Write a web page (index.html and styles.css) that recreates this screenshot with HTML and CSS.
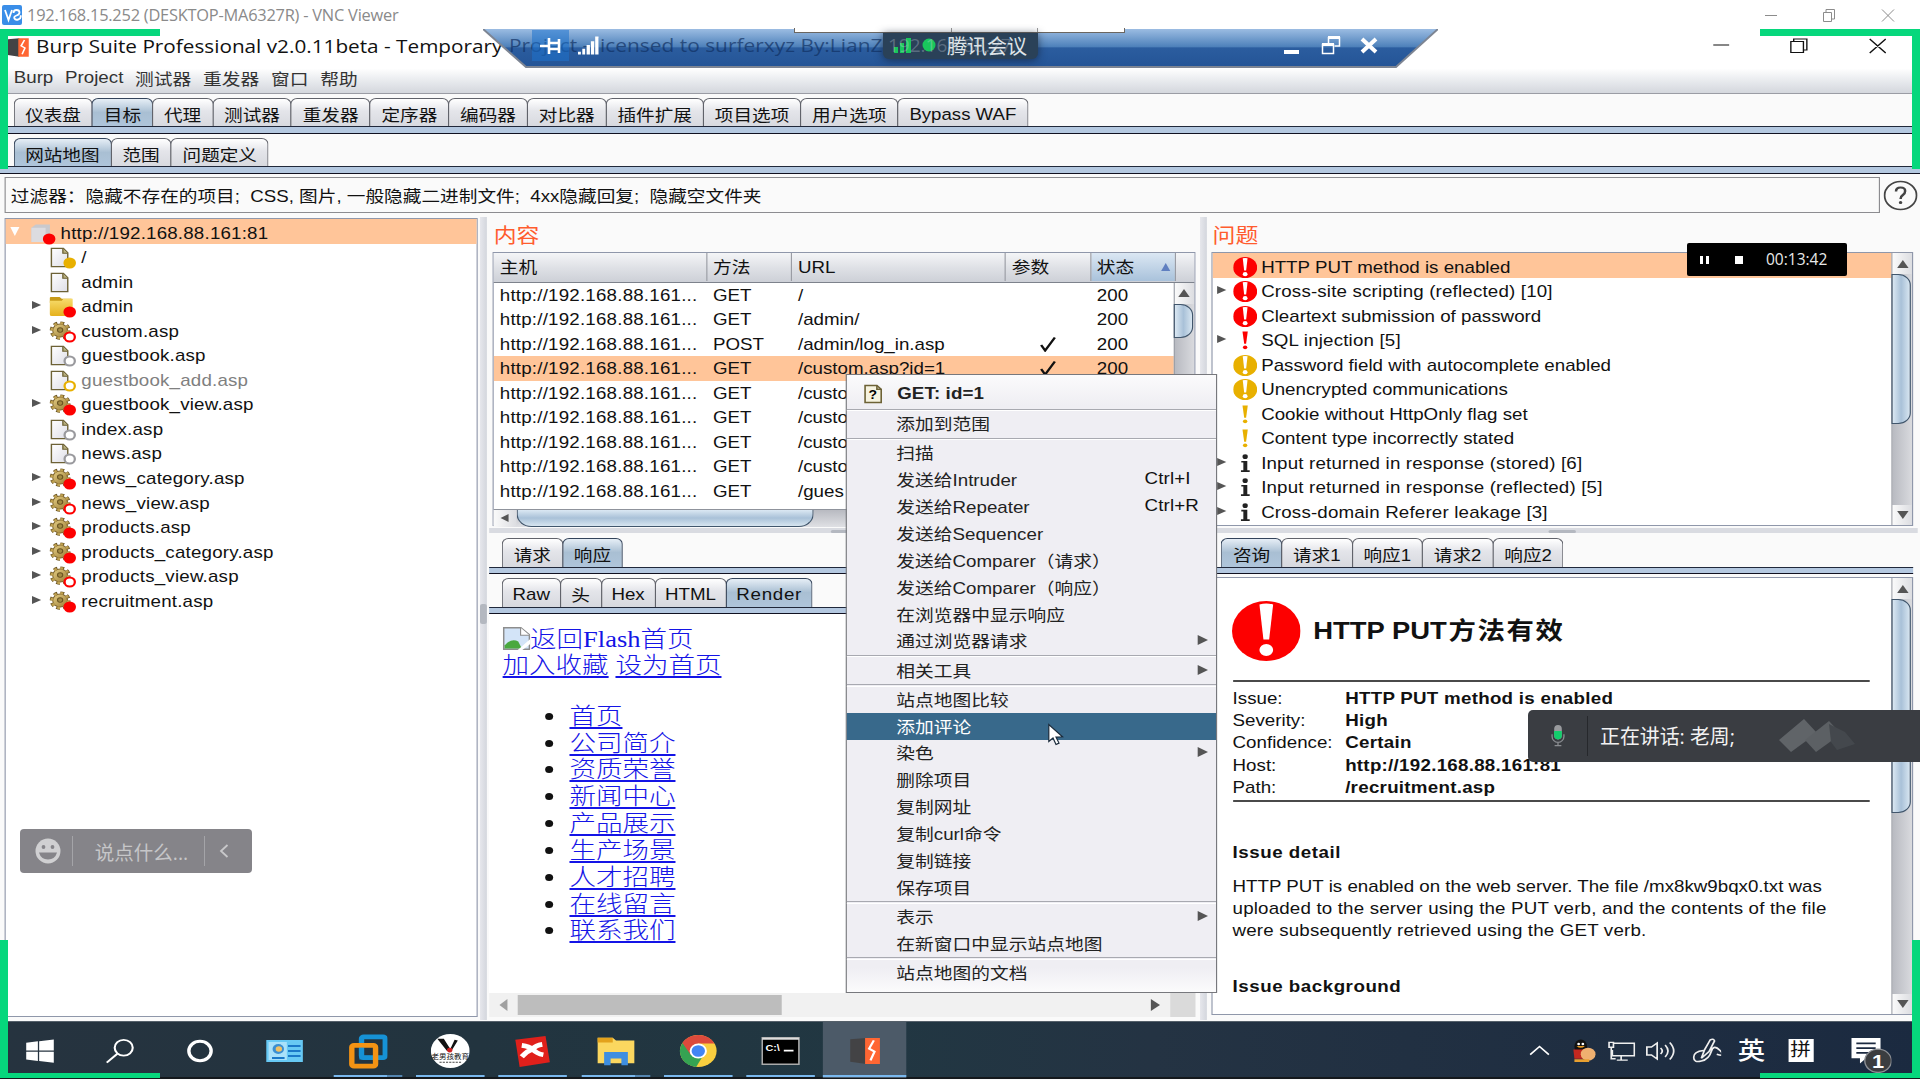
FILE: index.html
```html
<!DOCTYPE html>
<html lang="zh-CN">
<head>
<meta charset="utf-8">
<title>192.168.15.252 (DESKTOP-MA6327R) - VNC Viewer</title>
<link rel="stylesheet" href="styles.css">
</head>
<body>
<svg class="defs" width="0" height="0">
  <defs>
    <linearGradient id="gold" x1="0" y1="0" x2="1" y2="1"><stop offset="0" stop-color="#e6cf86"/><stop offset="1" stop-color="#9a7c33"/></linearGradient>
    <linearGradient id="fold" x1="0" y1="0" x2="0" y2="1"><stop offset="0" stop-color="#f7dc6c"/><stop offset="1" stop-color="#e5b11c"/></linearGradient>
    <linearGradient id="paper" x1="0" y1="0" x2="1" y2="1"><stop offset="0" stop-color="#fff"/><stop offset="1" stop-color="#dedee6"/></linearGradient>
    <symbol id="page" viewBox="0 0 24 22"><path d="M1.500 1.500h11l4 4.500v14.500h-15z" fill="url(#paper)" stroke="#6d6236" stroke-width="1.300"/><path d="M12 1.500v5h4.500" fill="#b9b07c" stroke="#6d6236" stroke-width="1.200"/></symbol>
    <symbol id="folder" viewBox="0 0 24 22"><path d="M0 2q0-1 1-1h8l2 2h9v4H0z" fill="#c79a18"/><path d="M0 5h11l1.500-2H21v16q0 2-2 2H2q-2 0-2-2z" fill="url(#fold)"/></symbol>
    <symbol id="gear" viewBox="0 0 24 22"><circle cx="9.500" cy="10" r="7.600" fill="none" stroke="#6b5523" stroke-width="4" stroke-dasharray="3.300 2.670"/><circle cx="9.500" cy="10" r="6.800" fill="url(#gold)" stroke="#806731" stroke-width="1"/><circle cx="9.500" cy="10" r="7.700" fill="none" stroke="#bfa150" stroke-width="2.600" stroke-dasharray="2.600 3.448"/><circle cx="9.500" cy="9.500" r="2.400" fill="#a38b42" stroke="#6b5523"/></symbol>
    <symbol id="dot" viewBox="0 0 12 12"><circle cx="6" cy="6" r="5.500" fill="currentColor"/></symbol>
    <symbol id="ring" viewBox="0 0 12 12"><circle cx="6" cy="6" r="4.500" fill="#fff" stroke="currentColor" stroke-width="2"/></symbol>
    <symbol id="alert" viewBox="0 0 60 60"><circle cx="30" cy="30" r="30" fill="currentColor"/><path d="M24 3.500q6-2 12 0l-3.500 35h-5z" fill="#fff"/><circle cx="30" cy="49" r="6" fill="#fff"/></symbol>
    <symbol id="bang" viewBox="0 0 20 20"><path d="M7.800 1.500h4.400l-1.400 11.500h-1.600z" fill="currentColor"/><circle cx="10" cy="16.500" r="1.800" fill="currentColor"/></symbol>
    <symbol id="info" viewBox="0 0 20 20"><circle cx="10" cy="3.500" r="2.200" fill="#222"/><path d="M6.800 7.500h5v9h2v1.500h-7.300v-1.500h2v-7.500h-1.700z" fill="#222"/></symbol>
    <symbol id="burp" viewBox="0 0 24 24"><path d="M1 2l12-1v22l-12-2z" fill="#434345"/><path d="M12 1h11v22H12z" fill="#ff6633"/><path d="M18.500 3l-3.500 7 4 2.500-3 7.500" fill="none" stroke="#fff" stroke-width="1.700"/></symbol>
  </defs>
</svg>

<header class="vnc">
  <svg class="vnc-logo" viewBox="0 0 20 20"><rect width="20" height="20" rx="2" fill="#3a8ee8"/><path d="M3 5l3.500 10L10 5M11.500 8q0-3 3-3t3 2.500q0 2-3 3t-2 3 4 .8 2-4" fill="none" stroke="#fff" stroke-width="1.800"/></svg>
  <span>192.168.15.252 (DESKTOP-MA6327R) - VNC Viewer</span>
  <svg class="vnc-btns" viewBox="0 0 130 16" fill="none" stroke="#8c8c8c"><path d="M0 8.500h12M58.500 5.500h8v9h-8zM61 5.500v-3h8.500v9.500H67M117 2.500l12 12M129 2.500l-12 12"/></svg>
</header>

<div class="screen">
<div class="remote">
  <div class="titlebar">
    <svg class="app-icon"><use href="#burp"/></svg>
    <span class="title">Burp Suite Professional v2.0.11beta - Temporary</span>
    <svg class="win-btns" viewBox="0 0 152 20" fill="none" stroke="#111" stroke-width="1.200"><path d="M0 9h14M68 5.500h11v11H68zM70.500 5.500v-2.500H82v11h-2.500M137 3l14 14M151 3l-14 14"/></svg>
  </div>
  <nav class="menubar"><span>Burp</span><span>Project</span><span>测试器</span><span>重发器</span><span>窗口</span><span>帮助</span></nav>

  <div class="tabs"><span class="tab">仪表盘</span><span class="tab on">目标</span><span class="tab">代理</span><span class="tab">测试器</span><span class="tab">重发器</span><span class="tab">定序器</span><span class="tab">编码器</span><span class="tab">对比器</span><span class="tab">插件扩展</span><span class="tab">项目选项</span><span class="tab">用户选项</span><span class="tab">Bypass WAF</span></div>
  <div class="tabs"><span class="tab on">网站地图</span><span class="tab">范围</span><span class="tab">问题定义</span></div>

  <div class="filter-row">
    <div class="filter">过滤器：隐藏不存在的项目;&nbsp; CSS, 图片, 一般隐藏二进制文件;&nbsp; 4xx隐藏回复;&nbsp; 隐藏空文件夹</div>
    <svg class="help" viewBox="0 0 30 30" fill="none" stroke="#444" stroke-width="1.600"><circle cx="15" cy="15" r="14"/><path d="M11 11q0-4 4-4t4 3.500q0 2.500-2 4t-2 4" stroke-width="2.200"/><circle cx="15" cy="22" r=".8" stroke-width="1.500"/></svg>
  </div>

  <main class="main">
    <section class="tree">
      <div class="node root"><i class="down"></i><span class="ico"><svg viewBox="0 0 24 22"><path d="M2 5l4-3.500h13v14L15 20H2z" fill="#c9c9cd"/><path d="M2 5h13v15H2z" fill="#dcdce0"/></svg><svg class="badge red"><use href="#dot"/></svg></span>http://192.168.88.161:81</div>
      <div class="node"><i></i><span class="ico"><svg><use href="#page"/></svg><svg class="badge amber"><use href="#dot"/></svg></span>/</div>
      <div class="node"><i></i><span class="ico"><svg><use href="#page"/></svg></span>admin</div>
      <div class="node"><i class="right"></i><span class="ico"><svg><use href="#folder"/></svg><svg class="badge red"><use href="#dot"/></svg></span>admin</div>
      <div class="node"><i class="right"></i><span class="ico"><svg><use href="#gear"/></svg><svg class="badge red"><use href="#ring"/></svg></span>custom.asp</div>
      <div class="node"><i></i><span class="ico"><svg><use href="#page"/></svg><svg class="badge gray"><use href="#ring"/></svg></span>guestbook.asp</div>
      <div class="node dim"><i></i><span class="ico"><svg><use href="#page"/></svg><svg class="badge amber"><use href="#ring"/></svg></span>guestbook_add.asp</div>
      <div class="node"><i class="right"></i><span class="ico"><svg><use href="#gear"/></svg><svg class="badge red"><use href="#dot"/></svg></span>guestbook_view.asp</div>
      <div class="node"><i></i><span class="ico"><svg><use href="#page"/></svg><svg class="badge gray"><use href="#ring"/></svg></span>index.asp</div>
      <div class="node"><i></i><span class="ico"><svg><use href="#page"/></svg><svg class="badge gray"><use href="#ring"/></svg></span>news.asp</div>
      <div class="node"><i class="right"></i><span class="ico"><svg><use href="#gear"/></svg><svg class="badge red"><use href="#dot"/></svg></span>news_category.asp</div>
      <div class="node"><i class="right"></i><span class="ico"><svg><use href="#gear"/></svg><svg class="badge red"><use href="#ring"/></svg></span>news_view.asp</div>
      <div class="node"><i class="right"></i><span class="ico"><svg><use href="#gear"/></svg><svg class="badge red"><use href="#dot"/></svg></span>products.asp</div>
      <div class="node"><i class="right"></i><span class="ico"><svg><use href="#gear"/></svg><svg class="badge red"><use href="#dot"/></svg></span>products_category.asp</div>
      <div class="node"><i class="right"></i><span class="ico"><svg><use href="#gear"/></svg><svg class="badge red"><use href="#ring"/></svg></span>products_view.asp</div>
      <div class="node"><i class="right"></i><span class="ico"><svg><use href="#gear"/></svg><svg class="badge red"><use href="#dot"/></svg></span>recruitment.asp</div>
    </section>

    <div class="vsplit"><b></b></div>

    <section class="center">
      <h2>内容</h2>
      <div class="table">
        <div class="tr th"><span>主机</span><span>方法</span><span>URL</span><span>参数</span><span class="sorted">状态<i class="up"></i></span><span></span></div>
        <div class="table-body">
          <div class="rows">
            <div class="tr"><span>http://192.168.88.161...</span><span>GET</span><span>/</span><span></span><span>200</span></div>
            <div class="tr"><span>http://192.168.88.161...</span><span>GET</span><span>/admin/</span><span></span><span>200</span></div>
            <div class="tr"><span>http://192.168.88.161...</span><span>POST</span><span>/admin/log_in.asp</span><span class="chk"><svg viewBox="0 0 14 16"><path d="M1 9l3.500 5.500L13 1.500" fill="none" stroke="#111" stroke-width="2.200"/></svg></span><span>200</span></div>
            <div class="tr sel"><span>http://192.168.88.161...</span><span>GET</span><span>/custom.asp?id=1</span><span class="chk"><svg viewBox="0 0 14 16"><path d="M1 9l3.500 5.500L13 1.500" fill="none" stroke="#111" stroke-width="2.200"/></svg></span><span>200</span></div>
            <div class="tr"><span>http://192.168.88.161...</span><span>GET</span><span>/custo</span><span></span><span></span></div>
            <div class="tr"><span>http://192.168.88.161...</span><span>GET</span><span>/custo</span><span></span><span></span></div>
            <div class="tr"><span>http://192.168.88.161...</span><span>GET</span><span>/custo</span><span></span><span></span></div>
            <div class="tr"><span>http://192.168.88.161...</span><span>GET</span><span>/custo</span><span></span><span></span></div>
            <div class="tr"><span>http://192.168.88.161...</span><span>GET</span><span>/gues</span><span></span><span></span></div>
          </div>
          <div class="vbar"><span class="btn"><i class="up"></i></span><span class="knob short"></span></div>
        </div>
        <div class="hbar"><span class="btn"><i class="left"></i></span><span class="knob"></span></div>
      </div>
      <div class="hsplit"><b></b></div>
      <div class="tabs"><span class="tab">请求</span><span class="tab on">响应</span></div>
      <div class="tabs view-tabs"><span class="tab">Raw</span><span class="tab">头</span><span class="tab">Hex</span><span class="tab">HTML</span><span class="tab on spaced">Render</span></div>
      <article class="render">
        <p><svg class="broken" viewBox="0 0 24 23"><path d="M.7.700h15l7.600 7v14.600H.7z" fill="#d3e4f8" stroke="#8d8d8d" stroke-width="1.400"/><path d="M15.500.700v7.500h7.800" fill="#fff" stroke="#8d8d8d"/><path d="M1.500 21.500v-3q6-8 12-4l3 7z" fill="#4aa83f"/><path d="M13 23l11-11v5l-7 6z" fill="#fff"/></svg><a class="plain">返回Flash首页</a></p>
        <p><a>加入收藏</a> <a>设为首页</a></p>
        <ul><li><a>首页</a></li><li><a>公司简介</a></li><li><a>资质荣誉</a></li><li><a>新闻中心</a></li><li><a>产品展示</a></li><li><a>生产场景</a></li><li><a>人才招聘</a></li><li><a>在线留言</a></li><li><a>联系我们</a></li></ul>
      </article>
      <div class="flatbar"><i class="left"></i><span class="flat-knob"></span><i class="right"></i><span class="flat-corner"></span></div>
    </section>

    <div class="vsplit"></div>

    <section class="side">
      <h2>问题</h2>
      <div class="issues">
        <div class="issue-list">
          <div class="issue sel"><i></i><svg class="red"><use href="#alert"/></svg>HTTP PUT method is enabled</div>
          <div class="issue wide"><i class="right"></i><svg class="red"><use href="#alert"/></svg>Cross-site scripting (reflected) [10]</div>
          <div class="issue"><i></i><svg class="red"><use href="#alert"/></svg>Cleartext submission of password</div>
          <div class="issue wide"><i class="right"></i><svg class="red"><use href="#bang"/></svg>SQL injection [5]</div>
          <div class="issue"><i></i><svg class="amber"><use href="#alert"/></svg>Password field with autocomplete enabled</div>
          <div class="issue"><i></i><svg class="amber"><use href="#alert"/></svg>Unencrypted communications</div>
          <div class="issue"><i></i><svg class="amber"><use href="#bang"/></svg>Cookie without HttpOnly flag set</div>
          <div class="issue"><i></i><svg class="amber"><use href="#bang"/></svg>Content type incorrectly stated</div>
          <div class="issue wide"><i class="right"></i><svg><use href="#info"/></svg>Input returned in response (stored) [6]</div>
          <div class="issue wide"><i class="right"></i><svg><use href="#info"/></svg>Input returned in response (reflected) [5]</div>
          <div class="issue wide"><i class="right"></i><svg><use href="#info"/></svg>Cross-domain Referer leakage [3]</div>
        </div>
        <div class="vbar"><span class="btn"><i class="up"></i></span><span class="knob list"></span><span class="btn end"><i class="down"></i></span></div>
      </div>
      <div class="hsplit"><b></b></div>
      <div class="tabs"><span class="tab on">咨询</span><span class="tab">请求1</span><span class="tab">响应1</span><span class="tab">请求2</span><span class="tab">响应2</span></div>
      <div class="advisory">
        <article class="doc">
          <h1><svg class="red"><use href="#alert"/></svg><span>HTTP PUT<span class="cn">方法有效</span></span></h1>
          <dl>
            <dt>Issue:</dt><dd>HTTP PUT method is enabled</dd>
            <dt>Severity:</dt><dd>High</dd>
            <dt>Confidence:</dt><dd>Certain</dd>
            <dt>Host:</dt><dd>http://192.168.88.161:81</dd>
            <dt>Path:</dt><dd>/recruitment.asp</dd>
          </dl>
          <h3>Issue detail</h3>
          <p>HTTP PUT is enabled on the web server. The file /mx8kw9bqx0.txt was<br><span class="wide">uploaded to the server using the PUT verb, and the contents of the file<br>were subsequently retrieved using the GET verb.</span></p>
          <h3>Issue background</h3>
        </article>
        <div class="vbar"><span class="btn"><i class="up"></i></span><span class="knob doc-knob"></span><span class="btn end"><i class="down"></i></span></div>
      </div>
    </section>
  </main>

  <footer class="taskbar">
    <span class="task"><svg viewBox="0 0 28 28" fill="#fff"><path d="M1 5l11-1.500v10H1zM13.200 3.400L27 1.500v12H13.200zM1 14.700h11v10L1 23.200zM13.200 14.700H27v12l-13.800-1.900z"/></svg></span>
    <span class="task"><svg viewBox="0 0 28 28" fill="none" stroke="#fff" stroke-width="2"><circle cx="17.500" cy="10.500" r="8.500"/><path d="M11.500 17L1.500 26.500"/></svg></span>
    <span class="task"><svg viewBox="0 0 28 28" fill="none" stroke="#fff" stroke-width="3.200"><circle cx="14" cy="14" r="10.500"/></svg></span>
    <span class="task"><svg viewBox="0 0 34 28"><path d="M1 3h32v22H1z" fill="#67c9f4"/><path d="M3 5h16v18H3z" fill="#a9e1fa"/><circle cx="11.500" cy="12" r="5" fill="#3b8fd2"/><circle cx="12" cy="12" r="2.800" fill="#f0c064"/><path d="M20 9h11M20 14h11M20 19h11M6 21h11" stroke="#1a78c8" stroke-width="2"/></svg></span>
    <span class="task open multi"><svg class="big" viewBox="0 0 36 36" fill="none" stroke-width="5"><rect x="12" y="3" width="22" height="22" rx="2" stroke="#1692d6"/><rect x="3" y="12" width="22" height="22" rx="2" stroke="#f39314"/><path d="M12 14.500V25h8" stroke="#1692d6" stroke-width="4"/></svg></span>
    <span class="task open"><svg class="big" viewBox="0 0 36 36"><circle cx="18" cy="18" r="18" fill="#fff"/><path d="M6 5h6l6 11 4-10 3 1-6 11h-4z" fill="#111"/><circle cx="17.500" cy="17" r="2.500" fill="#c22"/><text x="18" y="26" text-anchor="middle" font-size="7" fill="#111">老男孩教育</text><path d="M8 30h20" stroke="#444" stroke-dasharray="2 1"/></svg></span>
    <span class="task open"><svg class="big" viewBox="0 0 36 36"><path d="M2 6l28-4 4 28-28 5z" fill="#e0201b"/><path d="M8 12q7 1 10 4 3-4 9-5M8 24q5-6 10-8 4 5 10 6" stroke="#fff" stroke-width="5" fill="none"/></svg></span>
    <span class="task open multi"><svg class="big" viewBox="0 0 36 36"><path d="M1 4h14l3 3h17v24H1z" fill="#fbd75f"/><path d="M1 4h14v5H1z" fill="#e3a21c"/><path d="M7 19h22v14h-6v-7h-10v7H7z" fill="#3e8ee0"/></svg></span>
    <span class="task open"><svg class="big" viewBox="0 0 36 36"><circle cx="18" cy="18" r="17" fill="#f9ce3f"/><path d="M18 18L3.300 9.500A17 17 0 0 0 16 35l7-13z" fill="#35a352"/><path d="M3.300 9.500A17 17 0 0 1 33 10H18l-7 12z" fill="#dd4a3c"/><circle cx="18" cy="18" r="8" fill="#fff"/><circle cx="18" cy="18" r="6.200" fill="#4285f4"/></svg></span>
    <span class="task open"><svg class="big" viewBox="0 0 36 36"><path d="M1 4h34v28H1z" fill="#000" stroke="#aaa" stroke-width="1.500"/><path d="M1 5h34" stroke="#ddd" stroke-width="2"/><text x="4" y="18" font-size="10" font-weight="700" fill="#fff">C:\</text><path d="M21 17.500h9" stroke="#fff" stroke-width="1.800"/></svg></span>
    <span class="task open active"><svg class="big" viewBox="0 0 36 36"><use href="#burp" x="4" y="3" width="30" height="30"/></svg></span>
    <span class="tray">
      <svg class="t1" viewBox="0 0 22 24"><path d="M1 16l9-9 9 9" fill="none" stroke="#fff" stroke-width="1.600"/></svg>
      <svg class="t2" viewBox="0 0 26 26"><ellipse cx="11" cy="9" rx="6" ry="8" fill="#111"/><path d="M4 12h13v10H5z" fill="#c3281f"/><circle cx="18" cy="17" r="7" fill="#efb070"/><path d="M7 8q4 4 8 0" fill="#e99a22"/><circle cx="9" cy="6" r="1.300" fill="#fff"/><circle cx="13" cy="6" r="1.300" fill="#fff"/><path d="M5 24h14" stroke="#e8a030" stroke-width="3"/></svg>
      <svg class="t3" viewBox="0 0 26 24" fill="none" stroke="#eee" stroke-width="1.500"><path d="M6 4h19v13H5v-6M13 17v4M9 21.500h10M2 3h4v5H2zM4 8v12h4"/></svg>
      <svg class="t4" viewBox="0 0 26 24" fill="none" stroke="#eee" stroke-width="1.500"><path d="M1 8h4l5-4v16l-5-4H1zM13 9q3 3 0 6M17 6q5 6 0 12M21 3.500q7 8.500 0 17"/></svg>
      <svg class="t5" viewBox="0 0 26 26" fill="none" stroke="#eee" stroke-width="1.600"><path d="M8 21l3-9 5-10q3-2 4 1l-5 11-7 7zM10 13q-9 1-9 7t7 4 9-10 8-1-3 4"/></svg>
      <span class="t6">英</span><span class="t7">拼</span>
      <svg class="t8" viewBox="0 0 34 34"><path d="M1 1h24v19H13l-5 5v-5H1z" fill="#fff"/><path d="M5 6h16M5 10.500h16M5 15h12" stroke="#1c2a40" stroke-width="1.500"/><circle cx="23" cy="22.500" r="11" fill="#3b3d40" stroke="#8c8f94" stroke-width="1.200"/><text x="23" y="29" text-anchor="middle" font-size="18" font-weight="700" fill="#fff">1</text></svg>
    </span>
  </footer>

  <div class="ctx">
    <div class="mi head"><svg viewBox="0 0 17 20"><path d="M1 1h11l4 4v14H1z" fill="#f6f3e0" stroke="#6d6236" stroke-width="1.500"/><path d="M12 1v4h4" fill="none" stroke="#6d6236" stroke-width="1.500"/><text x="8.300" y="15.500" text-anchor="middle" font-size="13" font-weight="700">?</text></svg>GET: id=1</div>
    <hr>
    <div class="mi">添加到范围</div>
    <hr>
    <div class="mi">扫描</div>
    <div class="mi">发送给Intruder<kbd>Ctrl+I</kbd></div>
    <div class="mi">发送给Repeater<kbd>Ctrl+R</kbd></div>
    <div class="mi">发送给Sequencer</div>
    <div class="mi">发送给Comparer（请求）</div>
    <div class="mi">发送给Comparer（响应）</div>
    <div class="mi">在浏览器中显示响应</div>
    <div class="mi">通过浏览器请求<i class="right"></i></div>
    <hr>
    <div class="mi">相关工具<i class="right"></i></div>
    <hr>
    <div class="mi">站点地图比较</div>
    <div class="mi hot">添加评论</div>
    <div class="mi">染色<i class="right"></i></div>
    <div class="mi">删除项目</div>
    <div class="mi">复制网址</div>
    <div class="mi">复制curl命令</div>
    <div class="mi">复制链接</div>
    <div class="mi">保存项目</div>
    <hr>
    <div class="mi">表示<i class="right"></i></div>
    <div class="mi">在新窗口中显示站点地图</div>
    <hr>
    <div class="mi">站点地图的文档</div>
  </div>
</div>
</div>

<svg class="cursor" viewBox="0 0 16 22"><path d="M.8 1v17l4.200-3.500 3 6.500 3-1.400-3-6 6.500-.3z" fill="#fff" stroke="#1a2a3a" stroke-width="1.200"/></svg>

<div class="rdp">
  <svg class="rdp-bg" viewBox="0 0 955 39" preserveAspectRatio="none"><defs><linearGradient id="rdpg" x1="0" y1="0" x2="0" y2="1"><stop offset="0" stop-color="#9bbce2"/><stop offset=".46" stop-color="#4f82bb"/><stop offset=".5" stop-color="#2b5d9f"/><stop offset="1" stop-color="#245496"/></linearGradient></defs><path d="M0 0h955l-42 38H43z" fill="url(#rdpg)"/><path d="M0 0l43 38h870l42-38" fill="none" stroke="#7d8593" stroke-width="2"/></svg>
  <span class="ghost">Project - licensed to surferxyz By:LianZ</span>
  <span class="pin"><svg viewBox="0 0 22 16"><path d="M0 8h8M9 0v16M9 5h9M9 11h9M19 1v14" stroke="#fff" stroke-width="2.600" fill="none"/></svg></span>
  <svg class="signal" viewBox="0 0 22 19" fill="#fff"><path d="M0 16h3v3H0zM4.500 13h3v6h-3zM9 9h3.500v10H9zM13.500 5H17v14h-3.500zM18 0h3.500v19H18z"/></svg>
  <svg class="rdp-btns" viewBox="0 0 94 20" fill="none" stroke="#fff"><path d="M0 17h15" stroke-width="4"/><path d="M38.500 9.500h11v9h-11z" stroke-width="1.500"/><path d="M38 9.500h12M44 2.500h12" stroke-width="3"/><path d="M44.500 2v6M55.500 2v9h-5" stroke-width="1.500"/><path d="M78 4l14 13M92 4L78 17" stroke-width="4"/></svg>
</div>
<div class="notch"><b></b><b></b></div>
<div class="meeting"><em>192.168.88.27</em><svg viewBox="0 0 42 16" fill="#19c65c"><path d="M0 10h4v6H0zM6 6h4v10H6zM12 1h5v15h-5z"/><circle cx="35" cy="8" r="6.500"/></svg><span>腾讯会议</span></div>

<div class="recorder"><b></b><b></b><i></i><span>00:13:42</span></div>
<div class="speaking"><svg viewBox="0 0 16 26"><rect x="3.500" y="0" width="9" height="17" rx="4.500" fill="#999b9e"/><path d="M3.500 7h9v5.500a4.500 4.500 0 0 1-9 0z" fill="#12cf6c"/><path d="M1 11v2.500a7 7 0 0 0 14 0V11M8 20v4M4 24.500h8" fill="none" stroke="#8b8e92" stroke-width="1.500"/></svg><b></b><span>正在讲话: 老周;</span><svg class="smudge" viewBox="0 0 78 36"><path d="M0 22L25 1l13 14L12 34z" fill="#606468"/><path d="M26 22L50 3l12 13-25 18z" fill="#5c6064"/><path d="M50 6l16 8 10 12-18 6-6-8z" fill="#44484d"/></svg></div>
<div class="chat"><svg viewBox="0 0 28 26"><circle cx="14" cy="13" r="12.500" fill="#d0d0d2"/><circle cx="9.500" cy="9" r="1.900" fill="#858489"/><circle cx="18.500" cy="9" r="1.900" fill="#858489"/><path d="M5 14.500h18q-2 7-9 7t-9-7z" fill="#858489"/></svg><b></b><span>说点什么...</span><b></b><svg class="chev" viewBox="0 0 9 14"><path d="M8 1L1.500 7 8 13" fill="none" stroke="#c8c8ca" stroke-width="1.800"/></svg></div>

<div class="corner tl"></div><div class="corner tr-c"></div><div class="corner bl"></div><div class="corner br"></div>
</body>
</html>
```
FILE: styles.css
```css
* { box-sizing: border-box; }
body {
  margin: 0; width: 1920px; height: 1080px; overflow: hidden; background: #fff;
  font-family: "Liberation Sans", "Noto Sans CJK SC", sans-serif; color: #111;
}
.defs { position: absolute; }
svg { display: block; flex: none; }
i { flex: none; }

.vnc { height: 29px; display: flex; align-items: center; padding-left: 2px; color: #8a8a8a; font: 16.4px "Open Sans", sans-serif; }
.vnc-logo { width: 20px; height: 20px; margin-right: 5px; }
.vnc span { letter-spacing: -0.23px; margin-top: -1px; }
.vnc-btns { width: 130px; height: 16px; margin-left: auto; margin-right: 25px; }

/* The remote desktop is wider than it is drawn: only its width is scaled. */
.screen { width: 1920px; height: 1051px; overflow: hidden; }
.remote {
  position: relative; width: 1680px; height: 1051px; transform: scaleX(1.142857); transform-origin: 0 0;
  display: flex; flex-direction: column; background: #fafafa; font-size: 16.4px; white-space: nowrap;
}
.remote use { width: 100%; height: 100%; }
.red { color: #fd0000; } .amber { color: #e8b000; } .gray { color: #9a9a9e; }
.wide { letter-spacing: .15px; }

.titlebar { height: 35px; flex: none; display: flex; align-items: center; padding-left: 6px; background: #fff; }
.app-icon { width: 20px; height: 21px; margin-top: 1px; }
.title { margin: -2px 0 0 5.5px; font: 18.15px "Open Sans", sans-serif; color: #111; }
.win-btns { width: 152px; height: 20px; margin: -2px 29px 0 auto; }

.menubar {
  height: 30px; flex: none; display: flex; align-items: center; gap: 10.3px; padding: 0 12px 2px; color: #333;
  background: linear-gradient(#fff 15%, #eceef1 50%, #d4d7dd); border-bottom: 1px solid #9a9ca4;
}

.tabs {
  height: 40px; flex: none; display: flex; padding: 4px 0 0 11.5px; position: relative; font-size: 16.3px;
}
.tabs::after {
  content: ""; position: absolute; left: 0; right: 0; bottom: 0; height: 6px;
  background: #b4c8e0; border-top: 1.5px solid #20283a; border-bottom: 1.5px solid #101020;
}
.tab {
  height: 31px; display: flex; align-items: center; justify-content: center; padding: 0 9.5px; margin-right: -1px; min-width: 37px;
  border: 1px solid #61636b; border-bottom: 0; border-radius: 6px 6px 0 0;
  background: linear-gradient(#fff, #e4e5ea 40%, #d5d7dd); color: #111;
}
.tab.on { background: linear-gradient(#e6eef6, #a9bfd3 45%, #b0c6dc); border-color: #33435a; }
.view-tabs .tab { padding: 0 8.4px; font-size: 16.4px; }
.tab.spaced { letter-spacing: .6px; }

.filter-row { flex: none; display: flex; align-items: center; margin: 3px 0 0 3.5px; height: 36px; gap: 3px; }
.filter { width: 1641.5px; height: 36px; line-height: 36px; border: 1.6px solid #8c8c90; padding-left: 5px; font-size: 16.33px; }
.help { width: 30px; height: 31px; }

.main { flex: none; height: 807px; display: flex; padding-left: 3.5px; }
h2 { margin: 0; height: 39px; flex: none; font-size: 20px; font-weight: 400; line-height: 47px; color: #ff5c2e; padding-left: 4px; }
i { display: inline-block; width: 0; height: 0; border: 4px solid transparent; }
i.right { border-left: 8px solid #555; border-right: 0; }
i.left { border-right: 7px solid #555; border-left: 0; }
i.up { border-bottom: 8px solid #555; border-top: 0; }
i.down { border-top: 8px solid #555; border-bottom: 0; }

.tree { width: 414px; height: 799px; margin-top: 5px; border: 1.5px solid #8f97aa; background: #fff; flex: none; }
.node { height: 24.55px; display: flex; align-items: center; padding: 3.5px 0 0 23px; letter-spacing: .17px; }
.node > i { margin: 0 7.2px 3px 0; }
.node.root { background: #ffc599; padding-left: 4px; }
.node.root > i { border-top-color: #fff; margin-right: 8px; border-width: 9px 4.5px 0; }
.node.dim { color: #808080; }
.ico { position: relative; width: 23px; height: 21px; margin-right: 5.5px; flex: none; }
.ico svg { width: 24px; height: 21px; }
.ico .badge { position: absolute; width: 12px; height: 12px; right: -1px; bottom: -1px; }

.vsplit { flex: none; width: 6px; margin-left: 2.5px; background: linear-gradient(90deg, #e6e7ec, #d3d6dd); margin-top: 4px; display: flex; align-items: center; }
.vsplit b { width: 6px; height: 20px; background: #b4b8c0; border-radius: 2px; margin-top: -10px; }
.center { width: 622px; margin-left: 2px; flex: none; display: flex; flex-direction: column; }
.center + .vsplit { margin-left: 0; width: 5.5px; }

.table { margin-left: 2.8px; width: 615px; height: 274px; flex: none; border: 1.5px solid #8f97aa; background: #fff; }
.tr { display: grid; grid-template-columns: 186px 74.4px 187.2px 74.4px 74.4px 1fr; height: 24.55px; align-items: center; }
.tr span { padding-left: 6px; overflow: hidden; height: 24.500px; line-height: 25px; }
.rows .tr span:first-child { letter-spacing: .18px; padding-left: 5.500px; }
.th { height: 29.500px; border-bottom: 1.5px solid #7d828c; background: linear-gradient(#f4f5f7, #dfe1e6 50%, #cdd0d7); }
.th span { height: 28px; line-height: 27px; border-left: 1px solid #9a9ca4; display: flex; justify-content: space-between; align-items: center; padding-left: 5px; }
.th span:first-child { border-left: 0; padding-left: 5.500px; }
.th .sorted { background: linear-gradient(#dbe7f3, #a9c2db); }
.th .sorted i { border-bottom-color: #5f7fc0; margin-right: 4px; }
.table-body { display: flex; height: 226px; overflow: hidden; }
.rows { width: 595.500px; }
.rows .tr { grid-template-columns: 186px 74.400px 187.200px 74.400px 1fr; }
.sel { background: #ffc599; }
.tr .chk { display: flex; justify-content: center; align-items: center; padding: 0; }
.chk svg { width: 14px; height: 16px; }

.vbar { width: 18px; flex: none; background: linear-gradient(90deg, #b8bac1, #d9dade); border-left: 1px solid #8f939c; display: flex; flex-direction: column; }
.btn { height: 21px; display: flex; align-items: center; justify-content: center; background: linear-gradient(90deg, #fafafa, #dcdde1); }
.btn.end { margin-top: auto; height: 20px; }
.vbar .btn i { border-left-width: 5px; border-right-width: 5px; }
.knob { border: 1.5px solid #41566c; background: linear-gradient(90deg, #dbe8f3, #a9c1d8 50%, #d7e5f0); border-radius: 0 11px 11px 0; margin-left: -1px; margin-right: 1px; }
.knob.short { height: 34px; }
.knob.list { height: 150px; }
.knob.doc-knob { height: 214px; }
.hbar { height: 18px; display: flex; background: linear-gradient(#b8bac1, #dfe0e4); border-top: 1px solid #8f939c; }
.hbar .btn { width: 20px; height: 17px; }
.hbar .knob { width: 260px; height: 17px; border-radius: 0 0 13px 13px; border-top: 0; margin: 0; background: linear-gradient(#dbe8f3, #a9c1d8 50%, #d7e5f0); }

.hsplit { height: 5px; flex: none; margin-top: 2px; background: #d9dbe1; display: flex; justify-content: center; }
.hsplit b { width: 24px; height: 3px; background: #b4b8c0; border-radius: 2px; margin-top: 2px; }
.center .tabs, .side .tabs { height: 41px; padding-top: 5px; }
.center .tabs { padding-left: 11px; }
.center .tabs::after, .side .tabs::after { height: 5.5px; }
.center .tabs + .tabs { height: 40px; padding-top: 4px; }

.render { flex: 1; background: #fff; padding: 11.5px 0 0 11.8px; font: 23.2px/26.85px "Liberation Serif", "Noto Sans CJK SC", serif; font-weight: 300; overflow: hidden; }
.render p { margin: 0; display: flex; gap: 6px; }
.render p:first-child { gap: 0; }
.render a { color: #1414e6; text-decoration: underline; text-decoration-thickness: 1.800px; text-underline-offset: 2.500px; }
.render a.plain { text-decoration: none; }
.render ul { margin: 23.5px 0 0; padding-left: 58.500px; }
.broken { width: 24px; height: 23px; margin-top: 1px; }
.flatbar { height: 24px; flex: none; margin-bottom: 3px; background: #f1f1f1; display: flex; align-items: center; padding-left: 9px; width: 618px; }
.flatbar i.left { border-right-color: #a0a0a0; margin-right: 9px; border-top-width: 6px; border-bottom-width: 6px; }
.flat-knob { width: 231px; height: 20px; background: #bdbdbd; }
.flatbar i.right { margin-left: auto; margin-right: 9px; border-top-width: 6px; border-bottom-width: 6px; }
.flat-corner { width: 22px; height: 24px; background: #dadada; }

.side { flex: 1; min-width: 0; padding-left: 4px; margin-right: 6px; }
.side h2 { padding-left: 1.500px; }
.issues { display: flex; height: 274px; border: 1.5px solid #8f97aa; background: #fff; overflow: hidden; }
.issue-list { flex: 1; }
.issue { height: 24.550px; display: flex; align-items: center; padding: 3.500px 0 0 4px; }
.issue svg { width: 21px; height: 21px; margin: 0 3.500px 0 4.500px; }
.issue > i { border-width: 4px 5px; margin-bottom: 3px; }
.issue > i.right { border-width: 4px 0 4px 8px; margin-right: 2px; }
.side .hsplit { margin-left: -4px; margin-right: -4px; }
.side .tabs { padding-left: 8.800px; }
.advisory { margin-top: 3px; height: 438px; display: flex; border: 1.5px solid #8f97aa; background: #fff; overflow: hidden; }
.doc { flex: 1; padding: 23px 0 0 18px; }
.doc h1 { margin: 0; height: 60px; display: flex; align-items: center; gap: 11.500px; font-size: 24px; line-height: 56px; }
.doc h1 .cn { letter-spacing: 1.400px; margin-left: 1.500px; }
.doc h1 svg { width: 60px; height: 60px; margin-left: -1px; }
.doc dl { width: 557px; margin: 19px 0 0; padding: 5px 0 2px; height: 122px; border: solid #4a4a4a; border-width: 2px 0; display: grid; grid-template-columns: 98.500px 1fr; grid-auto-rows: 22.200px; line-height: 22.200px; }
.doc dd { margin: 0; font-weight: 700; letter-spacing: .240px; }
.doc h3 { margin: 39px 0 0; font-size: 16.400px; line-height: 22px; letter-spacing: .460px; }
.doc p { margin: 12px 0 0; line-height: 22.200px; }
.doc p + h3 { margin-top: 33.300px; }

.taskbar { position: relative; flex: none; height: 58px; margin-top: 1px; padding-left: 0; display: flex; background: linear-gradient(90deg, #26333f, #22343f 25%, #213742 45%, #243343 60%, #1b2a40); border-bottom: 2px solid #14181c; border-top: 1px solid #55606a; }
.task { width: 72.200px; padding: 2px 4px 0 0; height: 56px; display: flex; align-items: center; justify-content: center; position: relative; flex: none; }
.task svg { width: 26px; height: 26px; }
.task .big { width: 34px; height: 36px; }
.task:nth-child(-n+3) { width: 70px; padding: 2px 0 0; }
.task:nth-child(4) { width: 78px; padding: 2px 0 0; }
.task:nth-child(4) svg { width: 34px; height: 28px; }
.task.open::after { content: ""; position: absolute; left: 4px; width: 60px; bottom: 1px; height: 2px; background: #79b8ee; }
.task.multi::after { background: linear-gradient(90deg, #79b8ee 78%, #5485b0 78%); }
.task.active { background: #4c5a68; padding: 2px 0 0; margin-left: -.800px; }
.task.active::after { left: 0; width: 100%; }
.tray { margin-left: auto; margin-right: 25.500px; display: flex; align-items: center; padding-top: 2px; }
.t1 { width: 20px; height: 22px; margin-right: 15px; } .t2 { width: 24px; height: 25px; margin-right: 9px; }
.t3 { width: 25px; height: 24px; margin-right: 9.500px; } .t4 { width: 26px; height: 24px; margin-right: 15px; }
.t5 { width: 25px; height: 25px; margin-right: 14.500px; }
.t6 { font-size: 24px; color: #fff; margin-right: 20px; line-height: 30px; font-weight: 500; }
.t7 { width: 22px; height: 23px; background: #fff; font-size: 18px; line-height: 22px; text-align: center; color: #111; margin-right: 32px; }
.t8 { width: 36px; height: 36px; margin-top: 9px; }

.ctx { position: absolute; left: 739.500px; top: 345px; width: 325px; height: 619px; border: 1.600px solid #77787d; background: linear-gradient(#fbfbfc, #efeef3 5%, #efeef3 96%, #fbfbfc); color: #222; }
.mi { height: 26.860px; display: flex; align-items: center; padding: 0 0 2.500px 43.800px; position: relative; }
.mi.head { height: 33.800px; font-weight: 700; padding: 4px 0 0 15px; gap: 13.500px; letter-spacing: .100px; }
.mi.head svg { width: 16px; height: 20px; }
.mi.hot { background: #38698b; color: #fff; }
.mi kbd { font: inherit; position: absolute; left: 261px; top: 2px; color: #111; letter-spacing: .100px; }
.mi > i { margin-left: auto; margin-right: 7px; border-width: 5px 0 5px 9px; }
.ctx hr { margin: 0; border: 0; height: 2.300px; border-top: 1.400px solid #a8a9b0; border-bottom: 1px solid #fff; }

.cursor { position: absolute; left: 1048px; top: 723px; width: 16px; height: 23px; }

.rdp { position: absolute; left: 483px; top: 29px; width: 955px; height: 39px; }
.rdp > * { position: absolute; }
.rdp-bg { width: 955px; height: 39px; }
.ghost { left: 26px; top: 3px; font: 18.300px "Open Sans", sans-serif; color: rgba(16, 48, 98, .7); transform: scaleX(1.142857); transform-origin: 0 0; white-space: nowrap; }
.pin { left: 49px; top: 1px; width: 37px; height: 31px; background: rgba(30, 115, 205, .55); display: flex; align-items: center; justify-content: center; }
.pin svg { width: 22px; height: 16px; }
.signal { left: 95px; top: 7px; width: 21px; height: 19px; }
.rdp-btns { left: 801px; top: 6px; width: 94px; height: 20px; }
.notch { position: absolute; left: 794px; top: 28px; width: 331px; height: 5px; background: #fff; border: 1.500px solid #6b6660; border-top: 0; display: flex; justify-content: space-evenly; padding-left: 70px; }
.notch b { width: 1px; background: #999; }
.meeting { position: absolute; left: 883px; top: 33px; width: 155px; height: 26px; border-radius: 0 0 6px 6px; background: #2a4158; display: flex; align-items: center; padding: 0 0 2px 11px; gap: 11px; font-size: 20px; color: #dfe4e8; box-shadow: 0 1px 8px rgba(20, 30, 50, .7); }
.meeting em { position: absolute; left: 5px; font: 19px "Open Sans", sans-serif; color: rgba(210, 220, 230, .3); }
.meeting svg { width: 42px; height: 16px; }

.recorder { position: absolute; left: 1687px; top: 243px; width: 160px; height: 33px; background: #000; border-radius: 2px; display: flex; align-items: center; padding-left: 13px; color: #e8e8e8; font: 15.500px "Open Sans", sans-serif; }
.recorder b { width: 3px; height: 8px; background: #fff; margin-right: 3px; }
.recorder i { width: 8px; height: 8px; border: 0; background: #fff; margin: 0 23px 0 23px; }
.recorder span { margin-top: -2px; }
.speaking { position: absolute; left: 1528px; top: 710px; width: 392px; height: 52px; background: #3a3d42; border-radius: 5px 0 0 5px; display: flex; align-items: center; padding-left: 22px; color: #f2f2f2; font: 19.900px "Open Sans", "Noto Sans CJK SC", sans-serif; }
.speaking svg { width: 16px; height: 22px; }
.speaking b { width: 1px; height: 40px; background: #26282c; margin: 0 12px 0 21px; }
.speaking span { margin-top: -1px; }
.speaking .smudge { width: 78px; height: 36px; margin-left: 44px; }
.chat { position: absolute; left: 20px; top: 829px; width: 232px; height: 44px; background: #858489; border-radius: 4px; display: flex; align-items: center; padding-left: 14px; color: #c6c6c8; font: 19.500px "Open Sans", "Noto Sans CJK SC", sans-serif; }
.chat svg { width: 28px; height: 26px; }
.chat b { width: 1px; height: 30px; background: #a4a4a8; margin-left: 10px; }
.chat span { width: 131px; text-align: center; padding-left: 6px; }
.chat span + b { margin-left: 0; }
.chat .chev { width: 10px; height: 14px; margin-left: 14px; }

.corner { position: absolute; border: 0 solid #06d77c; width: 160px; height: 140px; }
.tl { left: 0; top: 29px; border-width: 7px 0 0 8px; }
.tr-c { right: 0; top: 29px; border-width: 7px 8px 0 0; }
.bl { left: 0; top: 940px; height: 138px; border-width: 0 0 5px 8px; }
.br { right: 0; top: 940px; height: 138px; border-width: 0 8px 5px 0; }
```
